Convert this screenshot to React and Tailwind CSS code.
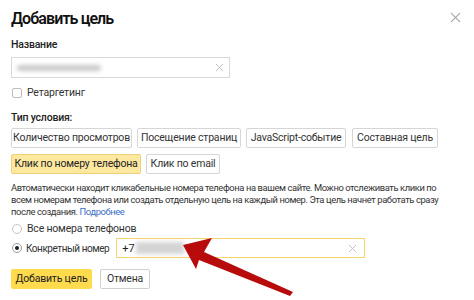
import React from 'react'

const font = { fontFamily: 'Roboto, "Liberation Sans", Arial, sans-serif' }

function Cross({ className }) {
  return (
    <svg viewBox="0 0 10 10" className={className} fill="none" stroke="currentColor" strokeWidth="1.1">
      <path d="M1 1 L9 9 M9 1 L1 9" />
    </svg>
  )
}

function TypeButton({ children, w, active }) {
  return (
    <div
      className={`h-[20px] ${w} flex items-center justify-center whitespace-nowrap rounded-[2px] border text-[10.5px] leading-none tracking-[-0.2px] ${
        active ? 'bg-[#fde8a0] border-[#ecd17a] text-[#222]' : 'bg-white border-[#d6d6d6] text-[#333]'
      }`}
    >
      {children}
    </div>
  )
}

export default function App() {
  return (
    <div className="relative w-[474px] h-[300px] bg-white overflow-hidden text-[#222]" style={font}>
      <div className="pl-[11px] pr-[12px] pt-[8px]">
        {/* Header */}
        <div className="flex items-start justify-between">
          <h1 className="text-[16px] leading-[22px] font-semibold text-[#111] tracking-[-0.9px]">Добавить цель</h1>
          <Cross className="w-[11px] h-[11px] mt-[4px] mr-[1px] text-[#a8a8a8]" />
        </div>

        {/* Название */}
        <div className="mt-[8px] text-[10.5px] leading-[13px] font-medium text-[#222] tracking-[-0.2px]">Название</div>
        <div className="mt-[6px] w-[219px] h-[21px] border border-[#d9d9d9] flex items-center justify-between px-[5px]">
          <div className="w-[84px] h-[6px] rounded-full bg-[#c9c9c9] blur-[2px]" />
          <Cross className="w-[9px] h-[9px] text-[#bdbdbd]" />
        </div>

        {/* Ретаргетинг */}
        <div className="mt-[8px] flex items-center gap-[5px] ml-[1px]">
          <div className="w-[10px] h-[10px] border border-[#bdbdbd] rounded-[2px] bg-white" />
          <span className="text-[10.5px] leading-[13px] text-[#333] tracking-[-0.2px]">Ретаргетинг</span>
        </div>

        {/* Тип условия */}
        <div className="mt-[12px] text-[10.5px] leading-[13px] font-medium text-[#222] tracking-[-0.2px]">Тип условия:</div>
        <div className="mt-[4px] flex gap-[5px]">
          <TypeButton w="w-[121px]">Количество просмотров</TypeButton>
          <TypeButton w="w-[104px]">Посещение страниц</TypeButton>
          <TypeButton w="w-[100px]">JavaScript-событие</TypeButton>
          <div className="ml-[1px]">
            <TypeButton w="w-[86px]">Составная цель</TypeButton>
          </div>
        </div>
        <div className="mt-[6px] flex gap-[5px]">
          <TypeButton w="w-[130px]" active>Клик по номеру телефона</TypeButton>
          <TypeButton w="w-[74px]">Клик по email</TypeButton>
        </div>

        {/* Description */}
        <p className="mt-[8px] text-[9.4px] leading-[12px] text-[#333] tracking-[-0.4px] whitespace-nowrap">
          Автоматически находит кликабельные номера телефона на вашем сайте. Можно отслеживать клики по
          <br />
          всем номерам телефона или создать отдельную цель на каждый номер. Эта цель начнет работать сразу
          <br />
          после создания. <span className="text-[#3b6fc6]">Подробнее</span>
        </p>

        {/* Radios */}
        <div className="mt-[4px] flex items-center gap-[5px] ml-[1px]">
          <div className="w-[10px] h-[10px] rounded-full border border-[#c4c4c4] bg-white" />
          <span className="text-[10.5px] leading-[13px] text-[#333] tracking-[-0.2px]">Все номера телефонов</span>
        </div>
        <div className="mt-[3px] w-[353px] flex items-center ml-[1px]">
          <div className="shrink-0 w-[10px] h-[10px] rounded-full border border-[#9a9a9a] bg-white flex items-center justify-center">
            <div className="w-[4px] h-[4px] rounded-full bg-[#222]" />
          </div>
          <span className="shrink-0 ml-[4px] whitespace-nowrap text-[10px] leading-[13px] text-[#333] tracking-[-0.45px]">Конкретный номер</span>
          <div className="ml-[7px] flex-1 h-[20px] border border-[#f5d46a] flex items-center justify-between pl-[5px] pr-[7px]">
            <div className="flex items-center">
              <span className="text-[11px] leading-[13px] text-[#222]">+7</span>
              <div className="ml-[1px] w-[48px] h-[12px] bg-[#d4d4d4] blur-[2px]" />
            </div>
            <Cross className="w-[9px] h-[9px] text-[#c4c4c4]" />
          </div>
        </div>

        {/* Actions */}
        <div className="mt-[11px] flex gap-[8px]">
          <div className="w-[81px] h-[20px] rounded-[2px] bg-[#ffdb4d] flex items-center justify-center whitespace-nowrap text-[10.5px] text-[#222] tracking-[-0.2px]">
            Добавить цель
          </div>
          <div className="w-[50px] h-[20px] rounded-[2px] border border-[#d0d0d0] bg-white flex items-center justify-center text-[10.5px] text-[#333] tracking-[-0.2px]">
            Отмена
          </div>
        </div>
      </div>

      {/* Red annotation arrow */}
      <svg className="absolute left-0 top-0 pointer-events-none" width="474" height="300" viewBox="0 0 474 300">
        <path d="M183 245 L212 238 L204 252 L293 292 L290 296 L199 260 L196 269 Z" fill="#b80c0c" />
      </svg>
    </div>
  )
}
